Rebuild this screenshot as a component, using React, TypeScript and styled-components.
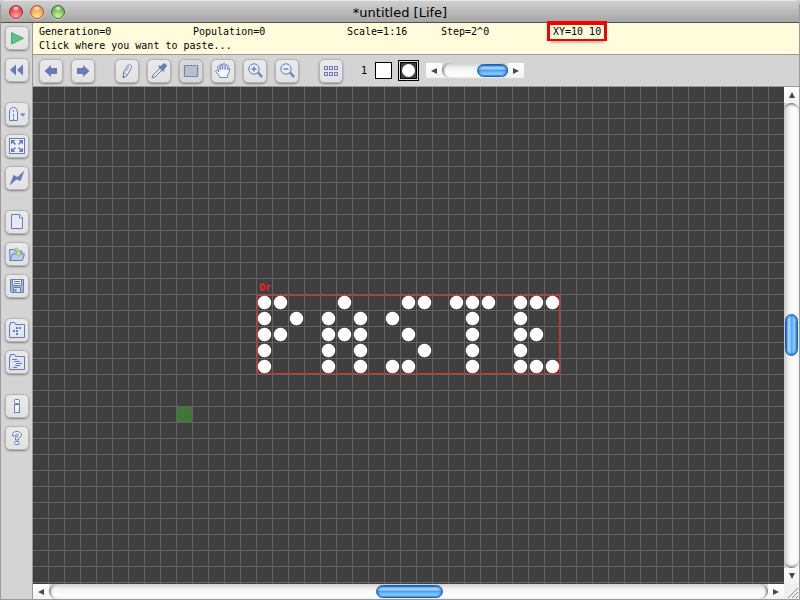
import React from "react";
import styled, { createGlobalStyle, css } from "styled-components";

const INK = "#6b7bb8";
const CELL = 16;

const GlobalStyle = createGlobalStyle`
  *, *::before, *::after { box-sizing: border-box; }
  html, body { margin: 0; background: #d4d4d4; }
  button { font: inherit; margin: 0; padding: 0; }
`;

const Window = styled.div`
  display: flex;
  flex-direction: column;
  min-height: 100vh;
  border: solid #9a9a9a;
  border-width: 0 1px 1px;
  border-radius: 5px 5px 0 0;
  overflow: hidden;
  background: #d4d4d4;
  color: #000;
  font-family: "DejaVu Sans", sans-serif;
  font-size: 12px;
`;

const TitleBar = styled.header`
  display: grid;
  grid-template-columns: 1fr auto 1fr;
  align-items: center;
  height: 23px;
  padding: 0 8px;
  border-top: 1px solid #e6e6e6;
  border-bottom: 1px solid #515151;
  background: linear-gradient(#cfcfcf, #a6a6a6);
`;

const Title = styled.h1`
  margin: 0;
  padding-top: 2px;
  font-size: 13px;
  line-height: 16px;
  font-weight: 400;
`;

const Lights = styled.div`
  display: flex;
  gap: 7px;
`;

const Light = styled.button<{ $dark: string; $mid: string; $glow: string }>`
  width: 14px;
  height: 14px;
  border: 1px solid ${(p) => p.$dark};
  border-radius: 50%;
  background:
    radial-gradient(ellipse 4px 3px at 50% 18%, rgba(255, 255, 255, 0.9), rgba(255, 255, 255, 0) 100%),
    radial-gradient(circle at 50% 90%, ${(p) => p.$glow}, ${(p) => p.$mid} 65%, ${(p) => p.$dark} 100%);
  box-shadow: 0 1px 0 rgba(255, 255, 255, 0.5);
`;

const Body = styled.div`
  flex: 1;
  display: flex;
  min-height: 0;
`;

const SideBar = styled.nav`
  flex: none;
  display: flex;
  flex-direction: column;
  align-items: center;
  gap: 20px;
  width: 32px;
  padding-top: 3px;
  border-right: 1px solid #999;
`;

const ButtonGroup = styled.div<{ $column?: boolean }>`
  display: flex;
  flex-direction: ${(p) => (p.$column ? "column" : "row")};
  gap: 8px;
`;

const ToolButton = styled.button<{ $active?: boolean }>`
  display: grid;
  place-items: center;
  width: 24px;
  height: 24px;
  border: 1px solid #b4b4b4;
  border-radius: 5px;
  background: ${(p) => (p.$active ? "#d8d8d8" : "linear-gradient(#e9e9e9, #e2e2e2)")};
  box-shadow: 0 1px 2px rgba(0, 0, 0, 0.4);
`;

const Main = styled.main`
  flex: 1;
  display: flex;
  flex-direction: column;
  min-width: 0;
`;

const Status = styled.section`
  display: grid;
  grid-template-columns: 154px 154px 94px 112px 1fr;
  grid-auto-rows: 14px;
  height: 32px;
  padding: 2px 0 0 6px;
  border-bottom: 1px solid #999;
  background: #fffcdc;
  font: 10px/14px "DejaVu Sans Mono", monospace;
`;

const Message = styled.span`
  grid-column: 1 / -1;
`;

const Highlight = styled.span`
  position: relative;
  justify-self: start;
  margin-left: -3px;
  padding: 0 3px;
  box-shadow: 0 -1px 0 3px #f80000, 0 4px 2px rgba(0, 0, 0, 0.25);
`;

const ToolBar = styled.div`
  display: flex;
  align-items: center;
  height: 32px;
  padding-left: 6px;
  border-bottom: 1px solid #999;
`;

const Tools = styled.div`
  display: flex;
  gap: 20px;
  margin-right: 18px;
`;

const StateNumber = styled.span`
  font-size: 10px;
  margin-right: 8px;
`;

const StateColor = styled.span`
  width: 17px;
  height: 17px;
  margin-right: 6px;
  border: 1px solid #000;
  background: #fff;
`;

const StateIcon = styled.button`
  display: grid;
  place-items: center;
  width: 21px;
  height: 21px;
  margin-right: 7px;
  border: 1px solid #000;
  padding: 1px;
  background: #ddd;
`;

const StateIconInner = styled.span`
  display: grid;
  place-items: center;
  width: 17px;
  height: 17px;
  border: 1px solid #000;
  background: #404040;

  &::before {
    content: "";
    width: 13px;
    height: 13px;
    border-radius: 50%;
    background: #fff;
  }
`;

const Viewport = styled.div`
  flex: 1;
  display: grid;
  grid-template-columns: 1fr 15px;
  grid-template-rows: 1fr 15px;
`;

const Universe = styled.div`
  position: relative;
  overflow: hidden;
  background-color: #3f3f3f;
  background-image:
    linear-gradient(to right, transparent 15px, #646464 15px),
    linear-gradient(to bottom, transparent 15px, #646464 15px);
  background-size: ${CELL}px ${CELL}px;
`;

const FreeCell = styled.div<{ $col: number; $row: number }>`
  position: absolute;
  left: ${(p) => p.$col * CELL}px;
  top: ${(p) => p.$row * CELL}px;
`;

const Cursor = styled(FreeCell)`
  width: 15px;
  height: 15px;
  background: #427637;
`;

const PasteMode = styled(FreeCell)`
  padding-left: 2px;
  color: #f52020;
  font: bold 10px/18px "DejaVu Sans Mono", monospace;
`;

const Pattern = styled(FreeCell)`
  border: 1px solid #e52828;

  svg { display: block; margin: -1px; }
`;

const horizontalTrack = css`
  background: linear-gradient(#d0d0d0, #f4f4f4 35%, #fff 80%, #eee);
`;
const verticalTrack = css`
  background: linear-gradient(to right, #c8c8c8, #f4f4f4 35%, #fff 80%, #eee);
`;

const Bar = styled.div<{ $vertical?: boolean; $small?: boolean }>`
  display: flex;
  flex-direction: ${(p) => (p.$vertical ? "column" : "row")};
  ${(p) => (p.$vertical ? verticalTrack : horizontalTrack)}
  ${(p) => p.$small && "width: 98px; height: 15px;"}
`;

const Arrow = styled.button<{ $vertical?: boolean }>`
  flex: none;
  display: grid;
  place-items: center;
  width: ${(p) => (p.$vertical ? 15 : 16)}px;
  height: ${(p) => (p.$vertical ? 16 : 15)}px;
  border: 0;
  background: linear-gradient(#fff, #f2f2f2);
`;

const Track = styled.div<{ $vertical?: boolean }>`
  flex: 1;
  display: flex;
  flex-direction: ${(p) => (p.$vertical ? "column" : "row")};
  border-radius: 8px;
  box-shadow: ${(p) =>
    p.$vertical
      ? "inset 0 4px 3px -3px #555, inset 0 -4px 3px -3px #555"
      : "inset 4px 0 3px -3px #555, inset -4px 0 3px -3px #555"};
`;

const Spacer = styled.div<{ $grow: number }>`
  flex: ${(p) => p.$grow} 1 0;
`;

const Thumb = styled.div<{ $vertical?: boolean; $length: number }>`
  flex: none;
  width: ${(p) => (p.$vertical ? 13 : p.$length)}px;
  height: ${(p) => (p.$vertical ? p.$length : 13)}px;
  margin: ${(p) => (p.$vertical ? "0 1px" : "1px 0")};
  border: 1px solid #1c5faf;
  border-radius: 7px;
  background: ${(p) =>
    p.$vertical
      ? "linear-gradient(to right, #2a7cd6, #b4dafa 20%, #86c0f6 42%, #58a9f0 50%, #8fd0fb 78%, #4f9fe0)"
      : "linear-gradient(#2a7cd6, #b4dafa 20%, #7fbcf5 42%, #4a9fee 50%, #86d0fc 78%, #9be0ff)"};
  box-shadow: inset 0 0 2px 1px rgba(20, 100, 200, 0.8);
`;

const Corner = styled.div`
  display: grid;
  place-items: end;
  background: #eee;
`;

type ArrowDir = "left" | "right" | "up" | "down";
const arrowPoints: Record<ArrowDir, string> = {
  left: "1,4 7,1 7,7",
  right: "7,4 1,1 1,7",
  up: "4,1 7,7 1,7",
  down: "4,7 7,1 1,1",
};

function ScrollBar(props: {
  label: string;
  vertical?: boolean;
  small?: boolean;
  before: number;
  after: number;
  length: number;
}) {
  const { label, vertical, small, before, after, length } = props;
  const dirs: ArrowDir[] = vertical ? ["up", "down"] : ["left", "right"];
  const arrow = (dir: ArrowDir) => (
    <Arrow type="button" $vertical={vertical} aria-label={`${label} ${dir}`}>
      <svg width="8" height="8" viewBox="0 0 8 8">
        <polygon points={arrowPoints[dir]} fill="#484848" />
      </svg>
    </Arrow>
  );
  return (
    <Bar $vertical={vertical} $small={small}>
      {arrow(dirs[0])}
      <Track $vertical={vertical}>
        <Spacer $grow={before} />
        <Thumb
          role="scrollbar"
          aria-label={label}
          aria-orientation={vertical ? "vertical" : "horizontal"}
          aria-valuenow={Math.round((100 * before) / (before + after))}
          $vertical={vertical}
          $length={length}
        />
        <Spacer $grow={after} />
      </Track>
      {arrow(dirs[1])}
    </Bar>
  );
}

const magnifier = (
  <>
    <circle cx="8" cy="7" r="5.2" fill="#e6edf6" />
    <path d="M12 10.500l4 4.500" strokeWidth="2.200" />
    <path d="M5.500 7h5" strokeWidth="1.400" />
  </>
);

const folder = (
  <path d="M1.500 16.500v-13h1v-2h4l1 2h9v13z" fill="#dfe8f5" />
);

const icons: Record<string, React.ReactNode> = {
  Start: <path d="M3.500 3.500v11.500l12-5.700z" fill="#5cc088" stroke="#4aa873" />,
  Reset: <path d="M2 9l6-5.500v11zM9 9l6-5.500v11z" fill={INK} stroke="none" />,
  Undo: <path d="M2.500 9l6.500-6v3h6v6H9v3z" fill={INK} stroke="none" />,
  Redo: <path d="M15.500 9L9 3v3H3v6h6v3z" fill={INK} stroke="none" />,
  Draw: (
    <>
      <path d="M5.500 15.500v-5l4-7q2-2 4 0.500v1.500l-4.500 8z" fill="#eef2f8" />
      <path d="M5.500 10.500q2.500 0 3.500 3M11 4.500l-3 5" strokeWidth=".8" />
      <path d="M5 14l2 1.500H5z" fill={INK} />
    </>
  ),
  Pick: (
    <>
      <path d="M2 15.800l1-2.800 7-7 2 2-7 7z" fill="#dfe8f5" />
      <path d="M9 4l5 5" strokeWidth="2" />
      <path d="M10.500 5L13 2.200q1.500-1 2.800.2t0 2.800L13 7.500z" fill={INK} />
    </>
  ),
  Select: (
    <>
      <rect x="1.500" y="3" width="15" height="12" fill="#b8bfcc" stroke="none" />
      <rect x="2.500" y="3.500" width="13" height="11" stroke="#59669a" strokeDasharray="2 1" />
    </>
  ),
  Move: (
    <path
      d="M6 15.500Q5 12.500 3 11T2 8.500q1.500-.5 3 1.500L3.500 5.500q0-1.500 1.200-1.300L6.500 8 6 3q.2-1.300 1.500-1L8.500 7.500 9 2q1-1 2 0v5.500l1.200-4.500q1.300-.7 1.800.5L13.500 8l1-2q1.300-.3 1.300 1-.3 4-2.300 6v2.500z"
      fill="#f3f6fb"
      strokeWidth=".9"
    />
  ),
  "Zoom in": (
    <>
      {magnifier}
      <path d="M8 4.500v5" strokeWidth="1.400" />
    </>
  ),
  "Zoom out": magnifier,
  "All states": (
    <>
      {[2.5, 7.5, 12.5].map((x) =>
        [4.5, 10.5].map((y) => <rect key={`${x}-${y}`} x={x} y={y} width="3" height="3" />)
      )}
    </>
  ),
  Algorithm: (
    <>
      <path d="M1.500 15.500V7q.5-4.500 4-4.500t4 4.500v8.500z" fill="#e6edf6" />
      <path d="M5.500 5v2M5.500 9v3M5.500 13v3" />
      <path d="M12 8.500h5.500l-2.700 3z" fill={INK} stroke="none" />
    </>
  ),
  Fit: (
    <>
      <rect x="1.500" y="1.500" width="15" height="15" fill="#eef2f8" />
      <path d="M3 3h4.500L3 7.500zM15 3v4.500L10.500 3zM3 15v-4.500L7.500 15zM15 15h-4.500l4.500-4.500z" fill={INK} stroke="none" />
      <path d="M4.500 4.500l3 3M13.500 4.500l-3 3M4.500 13.500l3-3M13.500 13.500l-3-3" strokeWidth="1.600" />
    </>
  ),
  Hyperspeed: <path d="M1.500 16.500L5.500 6l4 2 7-6.500L12.500 12l-4-1.500z" fill={INK} stroke="none" />,
  New: (
    <>
      <path d="M3.500 1.500h8l3 3.500v10.500h-11z" fill="#e3ebf7" />
      <path d="M11.500 1.500V5h3" fill="#fff" />
    </>
  ),
  Open: (
    <>
      <path d="M2 15.500L1.500 4.500h4l1 1.500H14v3" fill="#c3d4ec" />
      <path d="M2 15.500L4.500 9h12l-2 6.500z" fill="#b7d0ea" />
      <path d="M6.500 3.500q4-1.500 5 4H14l-3.500 4-3-4h2q-.5-2.500-3-2.500z" fill="#bce69a" stroke="#83b77e" strokeWidth=".8" />
    </>
  ),
  Save: (
    <>
      <path d="M2.500 2.500h13v13h-12l-1-1z" fill="#9dbade" />
      <path d="M4.500 2.500h9v6h-9z" fill="#f5f8fb" />
      <path d="M6 4.500h6M6 6.500h6" />
      <path d="M5.500 10.500h7v5h-7z" fill="#dde7f1" />
      <path d="M7.500 12v2.500" strokeWidth="2" />
    </>
  ),
  Patterns: (
    <>
      {folder}
      <path d="M8 6h2v2H8zM11 6h2v2h-2zM5 9h2v2H5zM8 9h2v2H8zM8 12h2v2H8z" fill={INK} stroke="none" />
    </>
  ),
  Scripts: (
    <>
      {folder}
      <path d="M4 6.500h5M6 8.500h6M8 10.500h6M7 12.500h5M5 14.500h4" />
    </>
  ),
  Info: (
    <>
      <rect x="6.500" y="2.500" width="5" height="4" rx="1" fill="#f1f4f9" />
      <rect x="6.500" y="7.500" width="5" height="8" fill="#f1f4f9" />
    </>
  ),
  Help: (
    <>
      <path d="M4.500 7V4.500Q6 2.500 9 2.500t4.500 2.500Q14 8 10.500 9.500V11h-3V8.500q3.500-1 3-2.500T7.500 6v1z" fill="#f1f4f9" />
      <rect x="6.500" y="12.500" width="4.500" height="3" rx="1" fill="#f1f4f9" />
    </>
  ),
};

function Tool({ name, active }: { name: string; active?: boolean }) {
  return (
    <ToolButton type="button" aria-label={name} title={name} $active={active}>
      <svg width="18" height="18" viewBox="0 0 18 18" fill="none" stroke={INK}>
        {icons[name]}
      </svg>
    </ToolButton>
  );
}

const sideGroups = [
  ["Start", "Reset"],
  ["Algorithm", "Fit", "Hyperspeed"],
  ["New", "Open", "Save"],
  ["Patterns", "Scripts"],
  ["Info", "Help"],
];

const toolGroups = [
  ["Undo", "Redo"],
  ["Draw", "Pick", "Select", "Move", "Zoom in", "Zoom out"],
  ["All states"],
];

const pasteRows = [
  "oo...o...oo.ooo.ooo",
  "o.o.o.o.o....o..o..",
  "oo..ooo..o...o..oo.",
  "o...o.o...o..o..o..",
  "o...o.o.oo...o..ooo",
];

function PastePattern() {
  const width = pasteRows[0].length * CELL - 1;
  const height = pasteRows.length * CELL - 1;
  return (
    <Pattern $col={14} $row={13}>
      <svg width={width} height={height} viewBox={`0 0 ${width} ${height}`}>
        <g fill="#fff">
          {pasteRows.map((row, r) =>
            [...row].map(
              (c, i) =>
                c === "o" && <circle key={`${r}-${i}`} cx={i * CELL + 7.5} cy={r * CELL + 7.5} r="6.7" />
            )
          )}
        </g>
      </svg>
    </Pattern>
  );
}

export default function App() {
  return (
    <Window>
      <GlobalStyle />
      <TitleBar>
        <Lights>
          <Light type="button" aria-label="Close" $dark="#a32a30" $mid="#e4444c" $glow="#ffb0a8" />
          <Light type="button" aria-label="Minimize" $dark="#a8602a" $mid="#f0a04c" $glow="#ffe9a0" />
          <Light type="button" aria-label="Zoom" $dark="#40762c" $mid="#74b552" $glow="#d5f8a8" />
        </Lights>
        <Title>*untitled [Life]</Title>
      </TitleBar>
      <Body>
        <SideBar>
          {sideGroups.map((group) => (
            <ButtonGroup key={group[0]} $column>
              {group.map((name) => (
                <Tool key={name} name={name} />
              ))}
            </ButtonGroup>
          ))}
        </SideBar>
        <Main>
          <Status>
            <span>Generation=0</span>
            <span>Population=0</span>
            <span>Scale=1:16</span>
            <span>Step=2^0</span>
            <Highlight>XY=10 10</Highlight>
            <Message>Click where you want to paste...</Message>
          </Status>
          <ToolBar>
            <Tools>
              {toolGroups.map((group) => (
                <ButtonGroup key={group[0]}>
                  {group.map((name) => (
                    <Tool key={name} name={name} active={name === "Select"} />
                  ))}
                </ButtonGroup>
              ))}
            </Tools>
            <StateNumber>1</StateNumber>
            <StateColor />
            <StateIcon type="button" aria-label="Drawing state">
              <StateIconInner />
            </StateIcon>
            <ScrollBar label="Drawing state" small before={36} after={0} length={31} />
          </ToolBar>
          <Viewport>
            <Universe>
              <PasteMode $col={14} $row={12}>Or</PasteMode>
              <PastePattern />
              <Cursor $col={9} $row={20} />
            </Universe>
            <ScrollBar label="Scroll vertically" vertical before={211} after={212} length={42} />
            <ScrollBar label="Scroll horizontally" before={327} after={326} length={67} />
            <Corner>
              <svg width="15" height="15" viewBox="0 0 15 15" stroke="#8a8a8a">
                <path d="M4 14L14 4M8 14l6-6M12 14l2-2" />
              </svg>
            </Corner>
          </Viewport>
        </Main>
      </Body>
    </Window>
  );
}
